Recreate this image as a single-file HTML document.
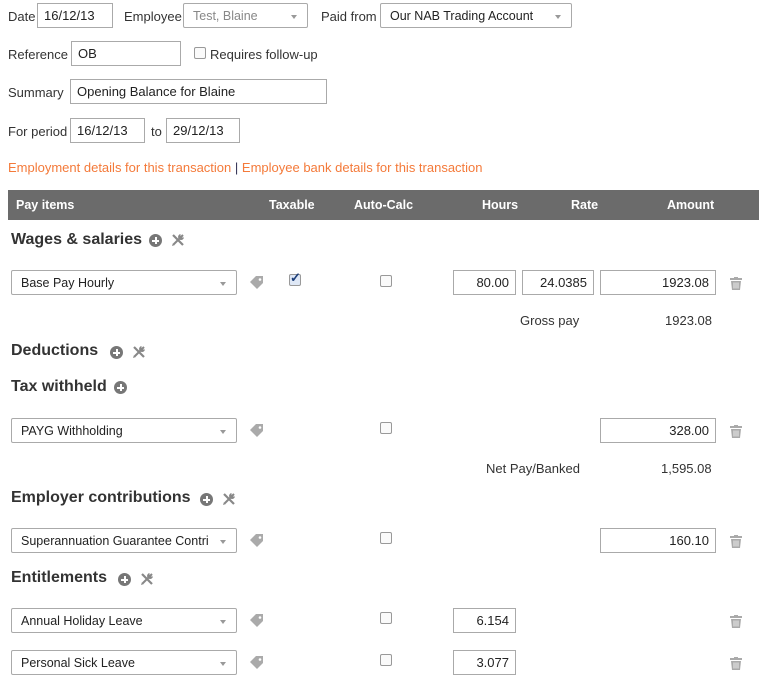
<!DOCTYPE html>
<html><head><meta charset="utf-8"><style>
body{margin:0;width:768px;height:694px;background:#fff;font-family:"Liberation Sans",sans-serif;font-size:13px;color:#333;position:relative;overflow:hidden}
.a{position:absolute;white-space:nowrap}
.in{position:absolute;box-sizing:border-box;border:1px solid #aaa;background:#fff;padding:0 6px;display:flex;align-items:center;font-size:13px;color:#222}
.r{justify-content:flex-end}
.sel{position:absolute;box-sizing:border-box;border:1px solid #aaa;border-radius:2px;background:#fff;padding:0 9px;display:flex;align-items:center;font-size:12.5px;color:#222}
.sel:after{content:"";position:absolute;right:10px;top:50%;margin-top:-1px;border:3.5px solid transparent;border-top:4px solid #999;border-bottom:0}
.cb{position:absolute;width:10px;height:10px;border:1px solid #999;border-radius:2px;background:#fafafa}
h3{position:absolute;margin:0;font-size:16px;font-weight:bold;color:#333;white-space:nowrap}
.plus{position:absolute;width:13px;height:13px;border-radius:50%;background:#777}
.plus:before{content:"";position:absolute;left:3px;top:5.5px;width:7px;height:2px;background:#fff}
.plus:after{content:"";position:absolute;left:5.5px;top:3px;width:2px;height:7px;background:#fff}
</style></head><body>
<svg width="0" height="0" style="position:absolute"><defs>
<g id="tag"><path d="M0 6 L6 0 H13 V7 L7 13 Z" fill="#aaa"/><circle cx="10" cy="3.5" r="1.3" fill="#fff"/></g>
<g id="bin"><rect x="0" y="1" width="12" height="2" fill="#aaa"/><rect x="4" y="0" width="4" height="1.5" fill="#aaa"/><path d="M1 4 H11 L10 13 H2 Z" fill="#aaa"/><path d="M4 5.5V11.5M6 5.5V11.5M8 5.5V11.5" stroke="#fff" stroke-width="0.8"/></g>
<g id="wr"><path d="M2 2 L12 12" stroke="#888" stroke-width="2.2"/><path d="M12 2 L3 11" stroke="#888" stroke-width="2"/><path d="M9.5 1 a3 3 0 1 0 3.5 3.5 l-2 0 l-1.5 -1.5 z" fill="#888"/><path d="M1 13 l3 -1 l-2 -2 z" fill="#888"/></g>
</defs></svg>

<div class="a" style="left:8px;top:9px">Date</div>
<div class="in" style="left:37px;top:3px;width:76px;height:25px">16/12/13</div>
<div class="a" style="left:124px;top:9px">Employee</div>
<div class="sel" style="left:183px;top:3px;width:125px;height:25px;color:#888">Test, Blaine</div>
<div class="a" style="left:321px;top:9px">Paid from</div>
<div class="sel" style="left:380px;top:3px;width:192px;height:25px">Our NAB Trading Account</div>

<div class="a" style="left:8px;top:47px">Reference</div>
<div class="in" style="left:71px;top:41px;width:110px;height:25px">OB</div>
<div class="cb" style="left:194px;top:47px"></div>
<div class="a" style="left:210px;top:47px">Requires follow-up</div>

<div class="a" style="left:8px;top:85px">Summary</div>
<div class="in" style="left:70px;top:79px;width:257px;height:25px">Opening Balance for Blaine</div>

<div class="a" style="left:8px;top:124px">For period</div>
<div class="in" style="left:70px;top:118px;width:75px;height:25px">16/12/13</div>
<div class="a" style="left:151px;top:124px">to</div>
<div class="in" style="left:166px;top:118px;width:74px;height:25px">29/12/13</div>

<div class="a" style="left:8px;top:160px;color:#f47a3a">Employment details for this transaction <span style="color:#335">|</span> Employee bank details for this transaction</div>

<div class="a" style="left:8px;top:190px;width:751px;height:30px;background:#6b6b6b;color:#fff;font-weight:bold;font-size:12.5px">
<span class="a" style="left:8px;top:8px">Pay items</span>
<span class="a" style="left:261px;top:8px">Taxable</span>
<span class="a" style="left:346px;top:8px">Auto-Calc</span>
<span class="a" style="left:474px;top:8px">Hours</span>
<span class="a" style="left:563px;top:8px">Rate</span>
<span class="a" style="left:659px;top:8px">Amount</span>
</div>

<h3 style="left:11px;top:231px">Wages &amp; salaries</h3>
<div class="plus" style="left:149px;top:234px"></div>
<svg class="a" style="left:171px;top:233px" width="14" height="14"><use href="#wr"/></svg>

<div class="sel" style="left:11px;top:270px;width:226px;height:25px">Base Pay Hourly</div>
<svg class="a" style="left:250px;top:276px" width="14" height="14"><use href="#tag"/></svg>
<div class="cb" style="left:289px;top:274px;background:#dfe8f6"><span style="position:absolute;left:0;top:-5px;font-size:13px;color:#1d3f7a;font-weight:bold">✓</span></div>
<div class="cb" style="left:380px;top:275px"></div>
<div class="in r" style="left:453px;top:270px;width:63px;height:25px">80.00</div>
<div class="in r" style="left:522px;top:270px;width:72px;height:25px">24.0385</div>
<div class="in r" style="left:600px;top:270px;width:116px;height:25px">1923.08</div>
<svg class="a" style="left:730px;top:277px" width="12" height="14"><use href="#bin"/></svg>
<div class="a" style="left:520px;top:313px">Gross pay</div>
<div class="a" style="left:665px;top:313px">1923.08</div>

<h3 style="left:11px;top:342px">Deductions</h3>
<div class="plus" style="left:110px;top:346px"></div>
<svg class="a" style="left:132px;top:345px" width="14" height="14"><use href="#wr"/></svg>

<h3 style="left:11px;top:378px">Tax withheld</h3>
<div class="plus" style="left:114px;top:381px"></div>

<div class="sel" style="left:11px;top:418px;width:226px;height:25px">PAYG Withholding</div>
<svg class="a" style="left:250px;top:424px" width="14" height="14"><use href="#tag"/></svg>
<div class="cb" style="left:380px;top:422px"></div>
<div class="in r" style="left:600px;top:418px;width:116px;height:25px">328.00</div>
<svg class="a" style="left:730px;top:425px" width="12" height="14"><use href="#bin"/></svg>
<div class="a" style="left:486px;top:461px">Net Pay/Banked</div>
<div class="a" style="left:661px;top:461px">1,595.08</div>

<h3 style="left:11px;top:489px">Employer contributions</h3>
<div class="plus" style="left:200px;top:493px"></div>
<svg class="a" style="left:222px;top:492px" width="14" height="14"><use href="#wr"/></svg>

<div class="sel" style="left:11px;top:528px;width:226px;height:25px">Superannuation Guarantee Contri</div>
<svg class="a" style="left:250px;top:534px" width="14" height="14"><use href="#tag"/></svg>
<div class="cb" style="left:380px;top:532px"></div>
<div class="in r" style="left:600px;top:528px;width:116px;height:25px">160.10</div>
<svg class="a" style="left:730px;top:535px" width="12" height="14"><use href="#bin"/></svg>

<h3 style="left:11px;top:569px">Entitlements</h3>
<div class="plus" style="left:118px;top:573px"></div>
<svg class="a" style="left:140px;top:572px" width="14" height="14"><use href="#wr"/></svg>

<div class="sel" style="left:11px;top:608px;width:226px;height:25px">Annual Holiday Leave</div>
<svg class="a" style="left:250px;top:614px" width="14" height="14"><use href="#tag"/></svg>
<div class="cb" style="left:380px;top:612px"></div>
<div class="in r" style="left:453px;top:608px;width:63px;height:25px">6.154</div>
<svg class="a" style="left:730px;top:615px" width="12" height="14"><use href="#bin"/></svg>

<div class="sel" style="left:11px;top:650px;width:226px;height:25px">Personal Sick Leave</div>
<svg class="a" style="left:250px;top:656px" width="14" height="14"><use href="#tag"/></svg>
<div class="cb" style="left:380px;top:654px"></div>
<div class="in r" style="left:453px;top:650px;width:63px;height:25px">3.077</div>
<svg class="a" style="left:730px;top:657px" width="12" height="14"><use href="#bin"/></svg>
</body></html>
